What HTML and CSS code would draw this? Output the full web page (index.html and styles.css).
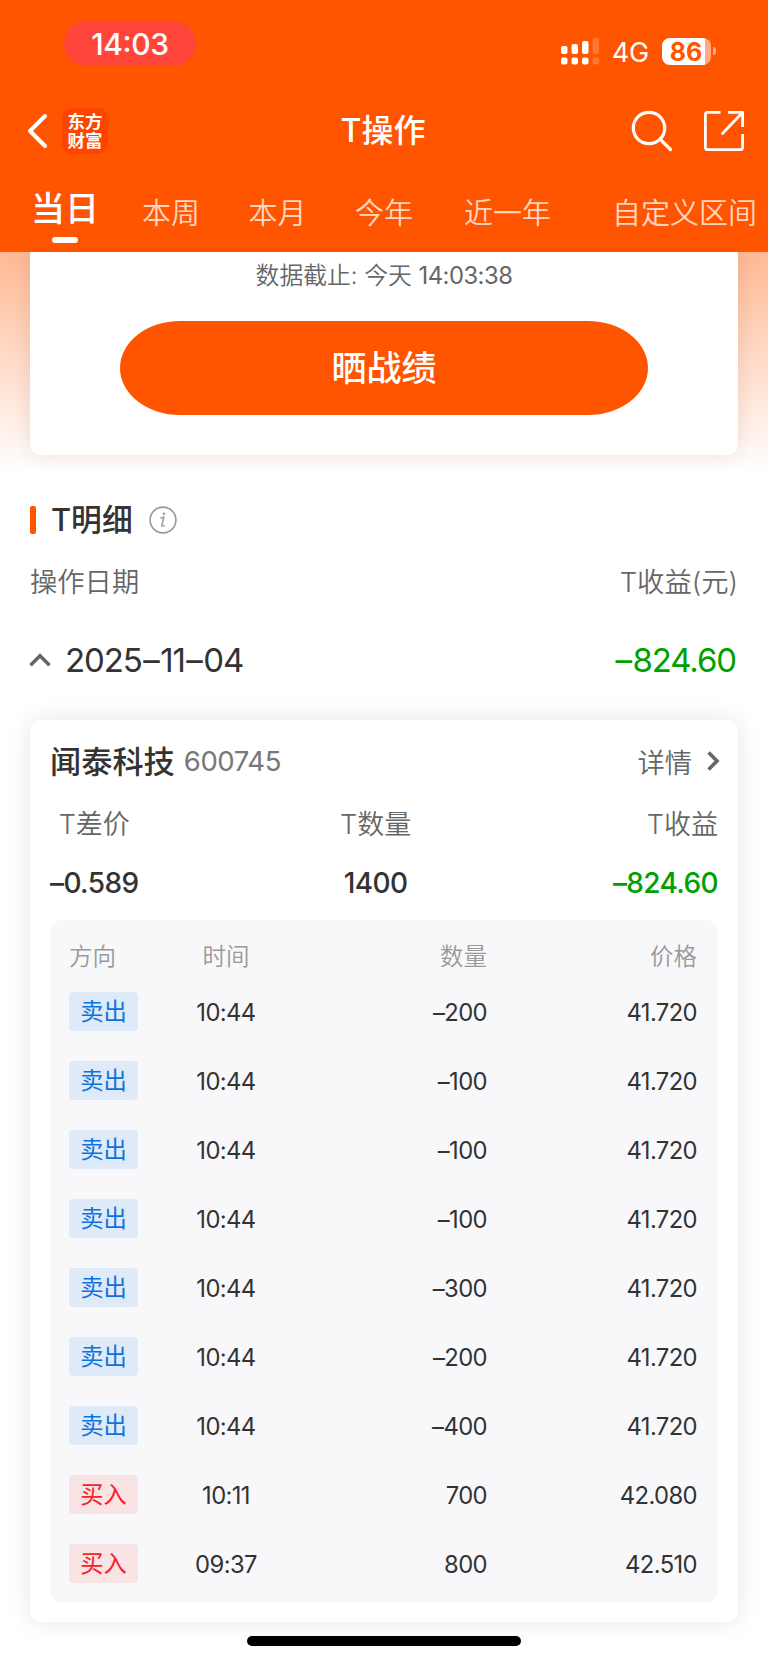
FILE: index.html
```
<!DOCTYPE html>
<html lang="zh-CN">
<head>
    <meta charset="utf-8">
    <title>T操作</title>
    <link rel="stylesheet" href="styles.css">
</head>
<body>

    <header class="header">
        <div class="status">
            <span class="clock">14:03</span>
            <div class="status-right">
                <svg class="signal" width="39" height="28" viewBox="0 0 39 28" fill="#fff">
                    <rect x="0" y="9" width="6.5" height="8" rx="2"/>
                    <rect x="10.5" y="7" width="6.5" height="10" rx="2"/>
                    <rect x="21" y="4" width="6.5" height="13" rx="2"/>
                    <rect x="31.5" y="1" width="6.5" height="16" rx="2" opacity=".2"/>
                    <rect x="0" y="20.5" width="6.5" height="7" rx="2"/>
                    <rect x="10.5" y="20.5" width="6.5" height="7" rx="2"/>
                    <rect x="21" y="20.5" width="6.5" height="7" rx="2"/>
                    <rect x="31.5" y="20.5" width="6.5" height="7" rx="2" opacity=".2"/>
                </svg>
                <span class="network">4G</span>
                <span class="battery">86</span>
                <span class="battery-cap"></span>
            </div>
        </div>

        <div class="nav">
            <svg class="back" width="21" height="36" viewBox="0 0 21 36" fill="none" stroke="#fff" stroke-width="4" stroke-linecap="round" stroke-linejoin="round">
                <path d="M18 3 L3 18 L18 33"/>
            </svg>
            <div class="logo">东方<br>财富</div>
            <h1 class="title">T操作</h1>
            <svg class="search" width="42" height="42" viewBox="0 0 42 42" fill="none" stroke="#fff" stroke-width="3.2" stroke-linecap="round">
                <circle cx="18" cy="18" r="15.7"/>
                <path d="M29.3 29.3 L39.5 39.5"/>
            </svg>
            <svg class="share" width="42" height="42" viewBox="0 0 42 42" fill="none" stroke="#fff" stroke-width="2.8" stroke-linejoin="round">
                <path d="M17.5 2.4 H4.5 Q2.4 2.4 2.4 4.5 V37.5 Q2.4 39.6 4.5 39.6 H37.5 Q39.6 39.6 39.6 37.5 V24"/>
                <path d="M25 2.4 H39.6 V17"/>
                <path d="M39 3 L19.5 23.5" stroke-linecap="round"/>
            </svg>
        </div>

        <nav class="tabs">
            <span class="tab active">当日</span>
            <span class="tab">本周</span>
            <span class="tab">本月</span>
            <span class="tab">今年</span>
            <span class="tab year">近一年</span>
            <span class="tab custom">自定义区间</span>
        </nav>
    </header>

    <section class="hero">
        <div class="summary">
            <p class="deadline">数据截止: 今天 <span>14:03:38</span></p>
            <button class="show-button">晒战绩</button>
        </div>
    </section>

    <main class="detail">
        <div class="section-title">
            <i class="bar"></i>
            <h2>T明细</h2>
            <svg width="28" height="28" viewBox="0 0 28 28" fill="none" stroke="#999" stroke-width="1.6">
                <circle cx="14" cy="14" r="12.9"/>
                <path d="M11.5 12 L14.8 11.2 L12.8 19.4 Q12.6 20.8 15.8 19.3" stroke-width="1.4"/>
                <circle cx="15" cy="7.8" r="1.3" fill="#999" stroke="none"/>
            </svg>
        </div>
        <div class="list-head">
            <span>操作日期</span>
            <span>T收益(元)</span>
        </div>
        <div class="day">
            <svg width="22" height="14" viewBox="0 0 22 14" fill="none" stroke="#666" stroke-width="3.6">
                <path d="M1.5 12.3 L11 2.8 L20.5 12.3"/>
            </svg>
            <span class="date">2025<i class="dash">–</i>11<i class="dash">–</i>04</span>
            <span class="day-profit"><i class="dash">–</i>824.60</span>
        </div>

        <div class="stock">
            <div class="stock-head">
                <h3>闻泰科技</h3>
                <span class="code">600745</span>
                <span class="more">详情</span>
                <svg width="13" height="20" viewBox="0 0 13 20" fill="none" stroke="#666" stroke-width="3.6">
                    <path d="M1.6 1.5 L10 10 L1.6 18.5"/>
                </svg>
            </div>
            <div class="stats">
                <div class="stat">
                    <span class="label">T差价</span>
                    <span class="value">–0.589</span>
                </div>
                <div class="stat">
                    <span class="label">T数量</span>
                    <span class="value">1400</span>
                </div>
                <div class="stat">
                    <span class="label">T收益</span>
                    <span class="value green">–824.60</span>
                </div>
            </div>

            <div class="trades">
                <div class="trade trades-head"><span>方向</span><span>时间</span><span>数量</span><span>价格</span></div>
                <div class="trade"><span class="tag sell">卖出</span><span>10:44</span><span>–200</span><span>41.720</span></div>
                <div class="trade"><span class="tag sell">卖出</span><span>10:44</span><span>–100</span><span>41.720</span></div>
                <div class="trade"><span class="tag sell">卖出</span><span>10:44</span><span>–100</span><span>41.720</span></div>
                <div class="trade"><span class="tag sell">卖出</span><span>10:44</span><span>–100</span><span>41.720</span></div>
                <div class="trade"><span class="tag sell">卖出</span><span>10:44</span><span>–300</span><span>41.720</span></div>
                <div class="trade"><span class="tag sell">卖出</span><span>10:44</span><span>–200</span><span>41.720</span></div>
                <div class="trade"><span class="tag sell">卖出</span><span>10:44</span><span>–400</span><span>41.720</span></div>
                <div class="trade"><span class="tag buy">买入</span><span>10:11</span><span>700</span><span>42.080</span></div>
                <div class="trade"><span class="tag buy">买入</span><span>09:37</span><span>800</span><span>42.510</span></div>
            </div>
        </div>
    </main>

    <div class="home-bar"></div>

</body>
</html>
```
FILE: styles.css
```
* {
    box-sizing: border-box;
}
body {
    margin: 0;
    width: 768px;
    height: 1663px;
    overflow: hidden;
    background: #fff;
    color: #333;
    font-family: Inter, "Noto Sans CJK SC", sans-serif;
    font-feature-settings: "calt" 0;
}
h1, h2, h3, p {
    margin: 0;
    font-weight: 500;
}
svg {
    display: block;
    flex: none;
}

/* header */
.header {
    height: 252px;
    background: #ff5500;
    color: #fff;
}
.status {
    display: flex;
    justify-content: space-between;
    height: 90px;
    padding: 21px 52px 0 64px;
}
.clock {
    width: 132px;
    height: 45px;
    border-radius: 23px;
    background: #ff453a;
    font-size: 30px;
    font-weight: 500;
    font-feature-settings: "calt" 1;
    letter-spacing: -0.4px;
    line-height: 46px;
    text-align: center;
}
.status-right {
    display: flex;
    align-items: center;
    height: 28px;
    margin-top: 16px;
}
.network {
    width: 37px;
    margin-left: 12px;
    padding-top: 2px;
    font-size: 27px;
    letter-spacing: -0.5px;
}
.battery {
    width: 49px;
    height: 27px;
    margin-left: 13px;
    padding-right: 1px;
    border-radius: 8px;
    background: linear-gradient(to right, #fff 43px, #ffaa80 43px);
    color: #ff5500;
    font-size: 25px;
    font-weight: 700;
    line-height: 28px;
    text-align: center;
}
.battery-cap {
    width: 3px;
    height: 8px;
    margin-left: 2px;
    border-radius: 0 3px 3px 0;
    background: #ffaa80;
}
.nav {
    display: flex;
    align-items: center;
    height: 81px;
    padding: 0 23px 0 27px;
}
.logo {
    width: 46px;
    height: 46px;
    margin-left: 14px;
    border-radius: 10px;
    background: #ff4400;
    font-family: "Noto Sans CJK SC", sans-serif;
    font-size: 17.5px;
    font-weight: 700;
    line-height: 19px;
    padding-top: 3px;
    text-align: center;
}
.title {
    width: 90px;
    margin-left: 230px;
    font-size: 32px;
    line-height: 40px;
    text-align: center;
}
.search {
    margin-left: 203px;
}
.share {
    margin-left: 30px;
}
.tabs {
    display: flex;
    height: 81px;
    padding: 19px 0 0 31px;
    white-space: nowrap;
}
.tab {
    margin-right: 48.5px;
    padding-top: 1px;
    font-size: 29px;
    font-weight: 350;
    line-height: 46px;
    color: #ffd5c0;
}
.tab.active {
    display: flex;
    flex-direction: column;
    align-items: center;
    margin-right: 43px;
    padding-top: 0;
    font-size: 34px;
    font-weight: 500;
    line-height: 38px;
    color: #fff;
}
.tab.active::after {
    content: "";
    width: 26px;
    height: 6px;
    margin-top: 9px;
    border-radius: 3px;
    background: #fff;
}
.tab:nth-child(4) {
    margin-right: 51px;
}
.tab.year {
    margin-right: 61px;
}
.tab.custom {
    margin-right: 0;
}

/* summary card */
.hero {
    height: 228px;
    padding: 0 30px;
    overflow: hidden;
    background: linear-gradient(#ffb994, #fff 220px);
}
.summary {
    height: 202.5px;
    border-radius: 0 0 10px 10px;
    background: #fff;
    box-shadow: 0 0 20px rgba(80, 40, 20, 0.12);
    text-align: center;
}
.deadline {
    padding-top: 9px;
    color: #666;
    font-size: 23.8px;
    font-weight: 350;
    line-height: 30px;
}
.deadline span {
    font-weight: 400;
    letter-spacing: -0.5px;
}
.show-button {
    display: block;
    width: 528px;
    height: 94px;
    margin: 30px auto 0;
    padding: 0 0 5px;
    border: none;
    border-radius: 60px / 47px;
    background: #ff5500;
    color: #fff;
    font-family: inherit;
    font-size: 35px;
    font-weight: 500;
}

/* detail list */
.detail {
    padding: 20px 30px 0;
}
.section-title {
    display: flex;
    align-items: center;
    height: 39px;
}
.bar {
    width: 6px;
    height: 28px;
    border-radius: 2px;
    background: #ff5500;
}
.section-title h2 {
    margin: 0 16px 0 15px;
    font-size: 30.8px;
    line-height: 40px;
}
.list-head {
    display: flex;
    justify-content: space-between;
    margin-top: 23px;
    color: #666;
    font-size: 27.3px;
    font-weight: 350;
    line-height: 42px;
}
.day {
    display: flex;
    align-items: center;
    height: 50px;
    margin: 31px 2px 0 -1px;
    font-size: 33px;
    letter-spacing: -1.1px;
}
.date {
    margin-left: 14px;
}
.dash {
    margin: 0 1.5px;
    font-style: normal;
}
.day-profit {
    margin-left: auto;
    color: #00a000;
}

/* stock card */
.stock {
    height: 902px;
    margin-top: 35px;
    padding: 20px;
    border-radius: 10px;
    background: #fff;
    box-shadow: 0 0 24px rgba(0, 0, 0, 0.1);
}
.stock-head {
    display: flex;
    align-items: center;
    height: 42px;
}
.stock-head h3 {
    padding-top: 1px;
    font-size: 31.2px;
    line-height: 42px;
}
.code {
    margin-left: 9px;
    color: #777;
    font-size: 27.5px;
    letter-spacing: -0.4px;
}
.more {
    margin: 0 15px 0 auto;
    color: #666;
    font-size: 27.3px;
    font-weight: 350;
}
.stock-head svg {
    margin-right: -2px;
}
.stats {
    display: flex;
    justify-content: space-between;
    height: 137.5px;
    padding-top: 22px;
}
.stat {
    display: flex;
    flex-direction: column;
    align-items: center;
}
.stat:last-child {
    align-items: flex-end;
}
.label {
    color: #666;
    font-size: 27px;
    font-weight: 350;
    line-height: 42px;
}
.value {
    margin-top: 16px;
    font-size: 28px;
    font-weight: 500;
    line-height: 42px;
    letter-spacing: -0.6px;
}
.green {
    color: #00a000;
}
.trades {
    height: 683px;
    padding: 19.5px 21px 0 19px;
    border-radius: 12px;
    background: #f8f8fb;
}
.trade {
    display: grid;
    grid-template-columns: 69px 176px 173px 1fr;
    align-items: center;
    height: 39px;
    margin-bottom: 30px;
    font-size: 23.8px;
    letter-spacing: -0.6px;
    text-align: right;
}
.trade span:nth-child(n+2) {
    padding-top: 1px;
}
.trade span:nth-child(2) {
    text-align: center;
}
.trades-head {
    height: 34px;
    margin-bottom: 19px;
    color: #999;
    font-size: 23.5px;
    font-weight: 350;
    letter-spacing: 0;
}
.trades-head span {
    margin-top: -3px;
}
.trades-head span:first-child {
    padding-top: 1px;
    text-align: left;
}
.tag {
    height: 39px;
    border-radius: 4px;
    font-size: 23.3px;
    letter-spacing: 0;
    line-height: 39px;
    text-align: center;
}
.sell {
    background: #deeaf7;
    color: #0d72e0;
}
.buy {
    background: #f8e3e5;
    color: #f8202a;
}

.home-bar {
    width: 274px;
    height: 10px;
    margin: 14px auto 0;
    border-radius: 5px;
    background: #000;
}
```
